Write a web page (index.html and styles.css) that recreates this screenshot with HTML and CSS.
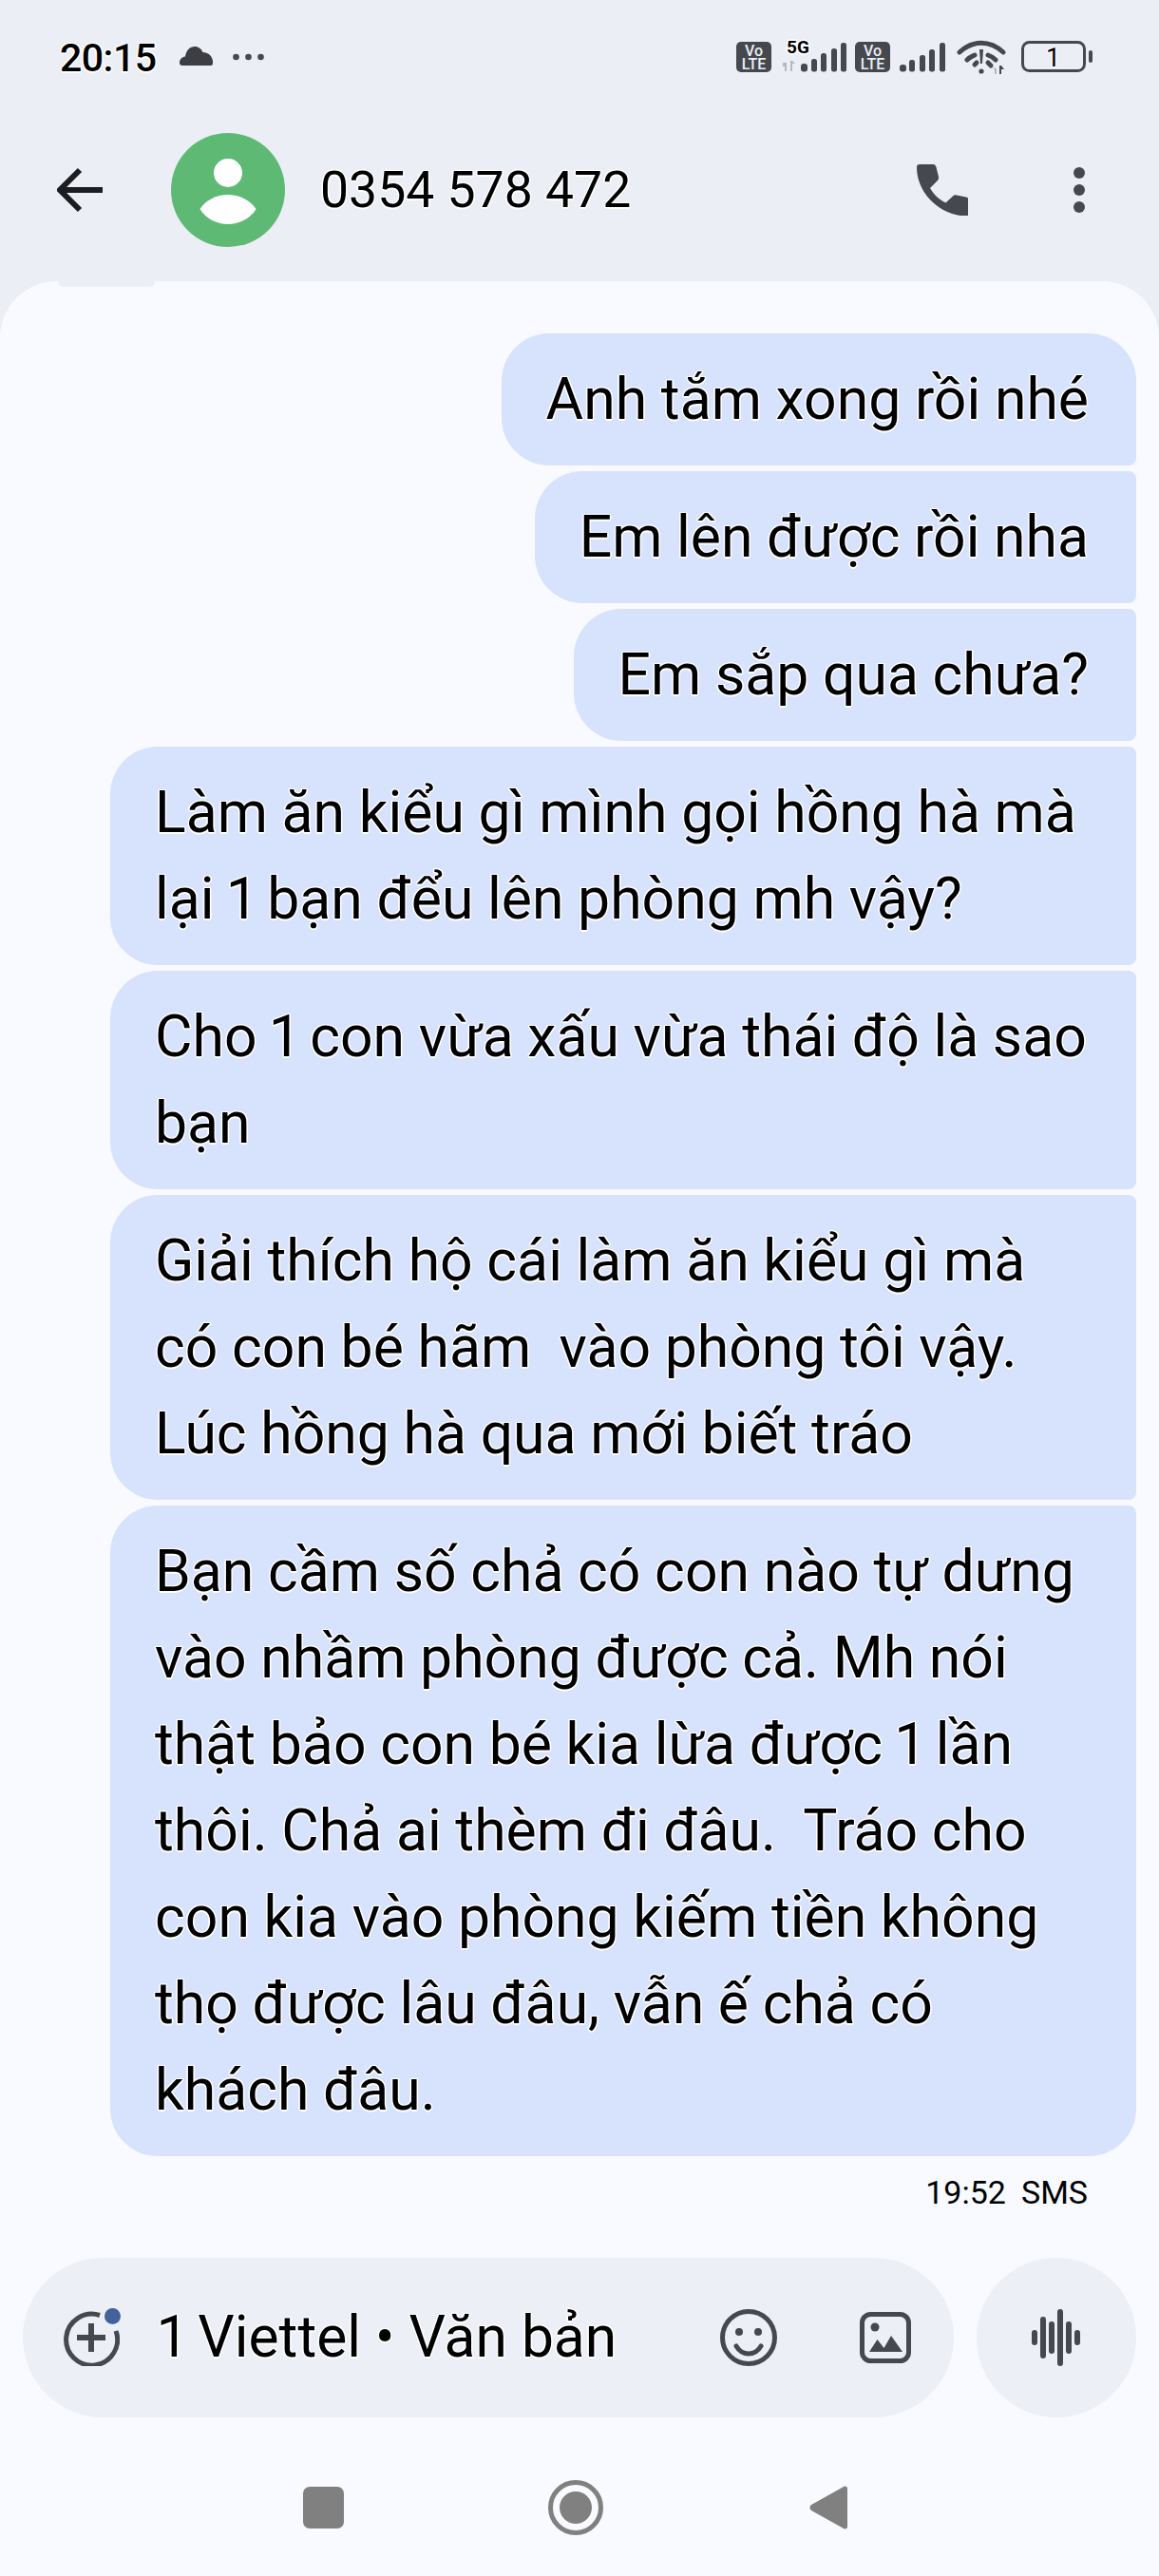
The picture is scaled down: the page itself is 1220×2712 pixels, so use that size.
FILE: index.html
```html
<!DOCTYPE html>
<html lang="vi">
<head>
<meta charset="utf-8">
<title>0354 578 472</title>
<link rel="stylesheet" href="styles.css">
</head>
<body>
<div class="screen">
  <header class="top">
    <div class="status">
      <div class="status-left">
        <span class="clock halo">20:15</span>
        <svg class="cloud" width="35" height="20" viewBox="0 0 35 20"><path d="M3 20a3 3 0 0 1-3-3c0-3.500 2.500-6 6-6.500C7 4 11 0 16 0c4 0 7 2.500 8.500 6 5.500 0 9.500 3.500 10.500 9v2.500a2.500 2.500 0 0 1-2.500 2.500z"/></svg>
        <svg class="dots" width="33" height="8" viewBox="0 0 33 8"><circle cx="3.500" cy="4" r="3.300"/><circle cx="16.500" cy="4" r="3.300"/><circle cx="29.500" cy="4" r="3.300"/></svg>
      </div>
      <svg class="status-right" width="376" height="52" viewBox="775 30 376 52">
        <g class="ic"><rect x="775" y="44" width="37" height="32" rx="5"/></g>
        <text class="vo" x="793.500" y="59">Vo</text><text class="vo" x="793.500" y="73">LTE</text>
        <text class="fiveg" x="840" y="56">5G</text>
        <g class="ghost">
          <path d="M824 66h4v9h-2v-5h-2zM832 64h2l3 3h-3v8h-2z" />
        </g>
        <g class="ic">
          <rect x="843" y="67" width="7" height="8.500" rx="3"/><rect x="854" y="62" width="6" height="13.500" rx="2.500"/><rect x="864" y="56" width="6" height="19.500" rx="2.500"/><rect x="875" y="51" width="6" height="24.500" rx="2.500"/><rect x="885" y="45" width="6" height="30.500" rx="2.500"/>
          <rect x="900" y="44" width="37" height="32" rx="5"/>
        </g>
        <text class="vo" x="918.500" y="59">Vo</text><text class="vo" x="918.500" y="73">LTE</text>
        <g class="ic">
          <rect x="947" y="68" width="7" height="7.500" rx="3"/><rect x="957" y="63" width="6" height="12.500" rx="2.500"/><rect x="968" y="58" width="6" height="17.500" rx="2.500"/><rect x="978" y="52" width="6" height="23.500" rx="2.500"/><rect x="989" y="45" width="6" height="30.500" rx="2.500"/>
        </g>
        <g class="wifi">
          <path d="M1010 55c14-13 32-13 46 0"/>
          <path d="M1018 63c3-3 6-4 8-5M1040 58c3 1 5 2 8 5"/>
          <path d="M1026 68l2-2M1040 66l3 3"/>
        </g>
        <path class="ink" d="M1031 52h4l-1 15h-2z"/><circle class="ink" cx="1033" cy="75" r="2.600"/>
        <path class="ghost" d="M1045 71l4 1v6h-2v-4z"/><path class="ink" d="M1052 78v-9h2l3 4h-3v5z"/>
        <rect class="bat" x="1076.500" y="44.500" width="65" height="30" rx="7"/>
        <rect class="ink" x="1146" y="53" width="4" height="13" rx="2"/>
        <text class="batnum" x="1108.500" y="70">1</text>
      </svg>
    </div>
    <div class="bar">
      <svg class="back" width="48" height="48" viewBox="0 0 48 48"><path d="M3 24h45M24 3 3 24l21 21"/></svg>
      <div class="avatar">
        <svg width="120" height="120" viewBox="0 0 120 120"><circle cx="60" cy="42" r="15"/><path d="M30.500 80c6-9 17-15 29.500-15s23.500 6 29.500 15c-5 9-16.500 16-29.500 16s-24.500-7-29.500-16z"/></svg>
      </div>
      <h1 class="name halo">0354 578 472</h1>
      <svg class="phone" width="54" height="54" viewBox="0 0 54 54"><path d="M3 0h14c2 0 3 1 3.500 3l2.500 10c.300 1.500 0 3-1 4l-8 8c4.500 7.500 10 12.500 16.500 15.500l7.500-7c1-1 2.500-1.500 4-1l10 2c2 .500 3 1.500 3 3.500v14c0 1.500-1 2.500-3 2.500C24 54 0 30 0 3 0 1 1 0 3 0z"/></svg>
      <svg class="kebab" width="12" height="48" viewBox="0 0 12 48"><circle cx="6" cy="6" r="6"/><circle cx="6" cy="24" r="6"/><circle cx="6" cy="42" r="6"/></svg>
    </div>
  </header>

  <main class="panel">
    <span class="notch"></span>
    <section class="thread">
      <p class="msg msg-first halo">Anh tắm xong rồi nhé</p>
      <p class="msg halo">Em lên được rồi nha</p>
      <p class="msg halo">Em sắp qua chưa?</p>
      <p class="msg halo">Làm ăn kiểu gì mình gọi hồng hà mà lại 1 bạn đểu lên phòng mh vậy?</p>
      <p class="msg halo">Cho 1 con vừa xấu vừa thái độ là sao bạn</p>
      <p class="msg halo">Giải thích hộ cái làm ăn kiểu gì mà có con bé hãm  vào phòng tôi vậy. Lúc hồng hà qua mới biết tráo</p>
      <p class="msg msg-last halo">Bạn cầm số chả có con nào tự dưng vào nhầm phòng được cả. Mh nói thật bảo con bé kia lừa được 1 lần thôi. Chả ai thèm đi đâu.  Tráo cho con kia vào phòng kiếm tiền không thọ được lâu đâu, vẫn ế chả có khách đâu.</p>
      <div class="meta"><span>19:52</span><span>SMS</span></div>
    </section>

    <div class="composer">
      <div class="input">
        <span class="add">
          <svg width="60" height="60" viewBox="0 0 60 60"><path class="stroke" d="M39 6.500A27 27 0 1 0 56 23"/><path class="plus" d="M30 15v30M15 30h30"/></svg>
          <span class="badge"></span>
        </span>
        <span class="hint halo">1 Viettel • Văn bản</span>
        <svg class="smile" width="60" height="60" viewBox="0 0 60 60"><circle class="stroke" cx="30" cy="30" r="27.500"/><circle class="fill" cx="20" cy="24" r="4"/><circle class="fill" cx="40" cy="24" r="4"/><path class="stroke thin" d="M17 39c3 5 8 8 13 8s10-3 13-8"/></svg>
        <svg class="pic" width="54" height="54" viewBox="0 0 54 54"><rect class="stroke" x="2.500" y="2.500" width="49" height="49" rx="9"/><circle class="fill" cx="16" cy="16" r="4.500"/><path class="fill" d="M10 42l8.500-13 7 9 7.500-13 12 17z"/></svg>
      </div>
      <div class="mic">
        <svg width="52" height="60" viewBox="0 0 52 60"><path d="M3 25v10M12 11v38M21 16v28M30 3v54M39 16v28M48 25v10"/></svg>
      </div>
    </div>

    <nav class="nav">
      <span class="nav-square"></span>
      <span class="nav-home"><span class="nav-dot"></span></span>
      <svg class="nav-back" width="40" height="48" viewBox="0 0 40 48"><path d="M36 2c2-1 4 0 4 2v40c0 2-2 3-4 2L2 27c-2-1.500-2-4.500 0-6z"/></svg>
    </nav>
  </main>
</div>
</body>
</html>
```
FILE: styles.css
```css
* { box-sizing: border-box; }
html, body { margin: 0; padding: 0; }
body { background: #ebeef5; font-family: Roboto, "Liberation Sans", sans-serif; color: #000; }
.screen { width: 1220px; height: 2712px; display: flex; flex-direction: column; overflow: hidden; background: #ebeef5; }
.halo { text-shadow: 1.5px 0 0 #fff, -1.5px 0 0 #fff, 0 1.5px 0 #fff, 0 -1.5px 0 #fff, 1px 1px 0 #fff, -1px 1px 0 #fff, 1px -1px 0 #fff, -1px -1px 0 #fff; }

.top { height: 296px; flex: none; }
.status { height: 112px; display: flex; justify-content: space-between; padding: 30px 69px 0 63px; }
.status-left { display: flex; align-items: flex-start; height: 52px; padding-top: 10px; }
.clock { font-size: 41px; line-height: 42px; font-weight: 500; letter-spacing: -0.5px; }
.cloud { fill: #3c3e43; margin: 9px 0 0 24px; }
.dots { fill: #45484f; margin: 16px 0 0 21px; }
.status-right { flex: none; }
.ic, .ink { fill: #45484f; }
.vo { font: 500 16px Roboto, sans-serif; fill: #ebeef5; text-anchor: middle; }
.fiveg { font: 700 19px Roboto, sans-serif; fill: #000; text-anchor: middle; stroke: #fff; stroke-width: 3px; paint-order: stroke; }
.ghost { fill: #b6b8bd; }
.wifi { fill: none; stroke: #45484f; stroke-width: 5px; stroke-linecap: round; }
.bat { fill: none; stroke: #45484f; stroke-width: 3px; }
.batnum { font: 400 27px Roboto, sans-serif; fill: #000; text-anchor: middle; stroke: #fff; stroke-width: 2px; paint-order: stroke; }

.bar { height: 176px; display: flex; align-items: center; padding: 0 78px 0 60px; }
.back { fill: none; stroke: #1c1d22; stroke-width: 6px; flex: none; }
.avatar { width: 120px; height: 120px; border-radius: 50%; background: #5eb974; margin-left: 72px; flex: none; fill: #fff; display: flex; }
.name { font-size: 53.5px; font-weight: 400; line-height: 60px; margin: 0 0 0 37px; flex: 1; }
.phone { fill: #45484f; flex: none; margin-right: 1px; }
.kebab { fill: #45484f; flex: none; margin-left: 110px; }

.panel { position: relative; flex: 1; background: #f8faff; border-radius: 60px 60px 0 0; display: flex; flex-direction: column; padding-top: 55px; }
.notch { position: absolute; left: 61px; top: 0; width: 102px; height: 6px; background: #ebeef5; border-radius: 0 0 30px 30px; }
.thread { display: flex; flex-direction: column; align-items: flex-end; gap: 6px; padding: 0 24px 0 116px; }
.msg { margin: 0; padding: 24px 50px 24px 47px; background: #d7e3fc; border-radius: 50px 8px 8px 50px; font-size: 60.7px; line-height: 91px; white-space: pre-wrap; max-width: 1080px; font-variant-numeric: proportional-nums; word-spacing: -0.4px; }
.msg-first { border-top-right-radius: 50px; }
.msg-last { border-bottom-right-radius: 50px; }
.meta { display: flex; gap: 16px; padding-right: 51px; margin-top: 7px; font-size: 34px; line-height: 50px; }

.composer { display: flex; gap: 24px; padding: 0 24px; margin-top: 44px; }
.input { flex: 1; height: 168px; border-radius: 84px; background: #ecEff5; display: flex; align-items: center; padding: 0 45px 0 42px; }
.add { position: relative; width: 60px; height: 60px; flex: none; }
.add svg { display: block; }
.badge { position: absolute; right: -1px; top: -1px; width: 17px; height: 17px; border-radius: 50%; background: #41639a; }
.stroke { fill: none; stroke: #45484f; stroke-width: 5px; }
.thin { stroke-linecap: round; }
.fill { fill: #45484f; }
.plus { fill: none; stroke: #45484f; stroke-width: 6px; }
.hint { font-size: 60.5px; line-height: 80px; margin-left: 41px; flex: 1; white-space: pre; font-variant-numeric: proportional-nums; }
.smile { flex: none; }
.pic { flex: none; margin-left: 87px; }
.mic { width: 168px; height: 168px; border-radius: 50%; background: #ecEff5; flex: none; display: flex; align-items: center; justify-content: center; }
.mic svg { fill: none; stroke: #45484f; stroke-width: 6px; stroke-linecap: round; }

.nav { display: flex; align-items: center; margin-top: 66px; padding-left: 319px; height: 58px; }
.nav-square { width: 43px; height: 44px; border-radius: 7px; background: #808080; flex: none; }
.nav-home { width: 58px; height: 58px; border-radius: 50%; border: 5px solid #808080; display: flex; align-items: center; justify-content: center; margin-left: 215px; flex: none; }
.nav-dot { width: 34px; height: 34px; border-radius: 50%; background: #808080; }
.nav-back { fill: #808080; margin-left: 217px; flex: none; }
```
